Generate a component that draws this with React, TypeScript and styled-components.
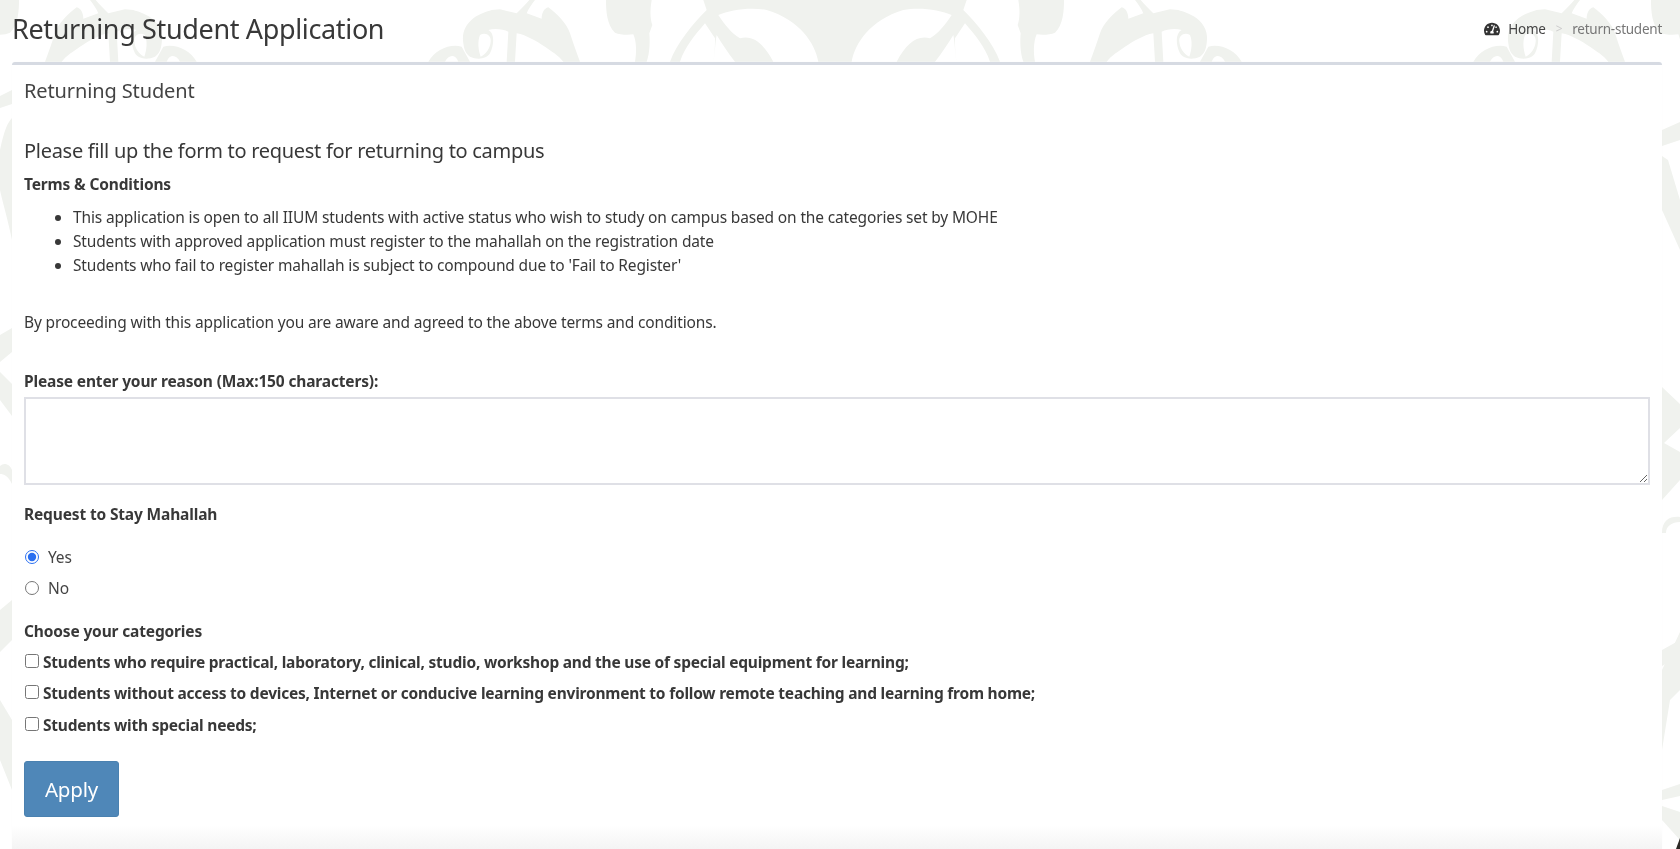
import { createGlobalStyle } from "styled-components"
import styled from "styled-components"
import { FaTachometerAlt } from "react-icons/fa"

const GlobalStyle = createGlobalStyle`
  html {
    height: 100%;
    background: #fff;
  }

  body {
    margin: 0;
    height: 100%;
    overflow: hidden;
    font-family: "Noto Sans", "Open Sans", sans-serif;
    color: #383838;
  }
`

const Backdrop = styled.svg`
  position: fixed;
  top: 0;
  left: 0;
  width: 1680px;
  height: 849px;
  z-index: -1;
`

const Page = styled.div`
  padding: 0 18px 0 12px;
`

const PageHeader = styled.header`
  display: flex;
  align-items: center;
  justify-content: space-between;
  height: 62px;
`

const Title = styled.h1`
  margin: 0 0 6px;
  font-size: 27px;
  font-weight: 400;
  letter-spacing: -0.35px;
  color: #383838;
`

const Breadcrumb = styled.nav`
  display: flex;
  align-items: center;
  margin-bottom: 5px;
  font-size: 13.5px;
  letter-spacing: -0.25px;
`

const Crumb = styled.span<{ $muted?: boolean }>`
  color: ${props => (props.$muted ? "#777" : "#444")};
`

const CrumbIcon = styled(FaTachometerAlt)`
  width: 16px;
  height: 16px;
  margin-right: 8px;
  color: #333;
`

const CrumbSeparator = styled.span`
  padding: 0 10px;
  color: #ccc;
  font-size: 12px;
`

const Card = styled.section`
  height: 784px;
  border-top: 3px solid #d6dae2;
  border-radius: 3px 3px 0 0;
  background: linear-gradient(to bottom, #fff 97%, #f4f4f4 100%);
  box-shadow: 0 0 1px rgba(0, 0, 0, 0.05);
`

const CardHeader = styled.div`
  height: 48px;
  padding: 13px 12px 0;
  box-sizing: border-box;
  font-size: 20px;
  letter-spacing: -0.12px;
  line-height: 25px;
  color: #444;
`

const CardBody = styled.div`
  padding: 24px 11px 0 12px;
`

const Lead = styled.h3`
  margin: 0 0 8px;
  font-size: 20px;
  line-height: 28px;
  font-weight: 400;
  letter-spacing: -0.29px;
  color: #383838;
`

const Strong = styled.div<{ $gap?: number }>`
  margin-top: ${props => props.$gap ?? 0}px;
  font-size: 15.5px;
  line-height: 22px;
  font-weight: 700;
  letter-spacing: -0.15px;
`

const Terms = styled.ul`
  margin: 9.5px 0 0;
  padding-left: 49px;
  font-size: 15.5px;
  line-height: 24px;
  letter-spacing: -0.15px;
`

const Note = styled.p`
  margin: 33px 0 0;
  font-size: 15.5px;
  line-height: 24px;
  letter-spacing: -0.15px;
`

const ReasonBox = styled.textarea`
  display: block;
  box-sizing: border-box;
  width: 1626px;
  height: 88px;
  margin: 5px 0 0;
  border: 2px solid #dfe0e6;
  background: #fff;
  outline: none;
`

const RadioGroup = styled.div`
  display: flex;
  flex-direction: column;
  gap: 9px;
  margin-top: 21px;
`

const Choice = styled.label`
  display: flex;
  align-items: center;
  height: 22px;
  font-size: 15.5px;
  letter-spacing: -0.15px;
  color: #444;
`

const Radio = styled.input.attrs({ type: "radio" })`
  width: 14px;
  height: 14px;
  margin: 0 9px 0 1px;
  accent-color: #2a6ff0;
`

const CheckList = styled.div`
  display: flex;
  flex-direction: column;
  gap: 9.5px;
  margin-top: 9px;
`

const CheckRow = styled.label`
  display: flex;
  align-items: center;
  height: 22px;
  font-size: 15.5px;
  font-weight: 700;
  letter-spacing: -0.22px;
`

const Check = styled.input.attrs({ type: "checkbox" })`
  width: 14px;
  height: 14px;
  margin: -2px 4px 0 1px;
`

const ApplyButton = styled.button`
  display: block;
  width: 95px;
  height: 56px;
  margin: 25px 0 0;
  border: 1px solid #4a81b0;
  border-radius: 3px;
  background: #4f87b8;
  color: #fff;
  font-family: inherit;
  font-size: 20.5px;
  letter-spacing: -0.2px;
`

const motif = "#f0f2ee"

// one half of the repeating batik tile, traced at 3x so x = 420 + px / 3
const Pattern = () => (
  <Backdrop viewBox="0 0 1680 849" aria-hidden="true">
    <defs>
      <g id="half">
        <g transform="translate(420 0) scale(0.33333)">
          <path
            fill={motif}
            d="M130 130 C125 100 135 75 160 55 C180 40 200 35 215 30 L240 28 L290 40 C300 30 315 15 328 0 L345 0 C335 12 325 28 320 40 L365 56 C365 40 372 25 385 22 C410 40 440 70 450 100 C460 130 470 160 480 185 L430 185 C415 165 395 155 375 140 C350 125 320 105 290 100 L285 185 L260 185 L265 95 C250 88 225 84 205 90 C225 100 222 135 210 160 C200 178 170 180 150 170 C135 160 132 145 130 130 Z"
          />
          <path fill="#fff" d="M180 105 C195 95 215 105 212 125 C210 145 200 160 182 170 C175 150 172 125 180 105 Z" />
          <path fill={motif} d="M25 185 C45 150 90 130 125 140 L150 185 Z" />
          <path fill="#fff" d="M75 185 C85 165 105 160 115 185 Z" />
          <path
            fill={motif}
            d="M558 0 C558 30 560 75 585 98 C600 105 625 105 640 103 C650 125 650 160 645 185 L680 185 C690 160 690 120 688 100 L697 75 C690 55 690 30 695 0 Z"
          />
          <path
            fill={motif}
            d="M750 185 C770 130 820 70 860 30 L850 0 L1245 0 L1245 185 L1195 185 C1185 130 1140 60 1040 30 C990 20 930 30 895 45 C915 75 935 100 960 115 C1000 105 1030 130 1060 185 L945 185 C925 160 905 130 890 105 C885 130 885 165 880 185 C885 160 885 130 885 115 L855 70 C825 105 795 140 780 185 Z"
          />
        </g>
      </g>
    </defs>
    <use href="#half" />
    <use href="#half" transform="translate(1670 0) scale(-1 1)" />
    <use href="#half" transform="translate(1045 0)" />
    <use href="#half" transform="translate(625 0) scale(-1 1)" />
    <g fill={motif}>
      {/* left strip */}
      <path d="M0 96 L12 90 L12 104 L0 108 Z" />
      <path d="M0 150 C4 130 8 122 12 118 L12 240 C8 220 2 200 0 190 Z" />
      <path d="M0 335 L12 328 L12 352 L0 362 Z" />
      <path d="M0 372 L12 384 L12 416 L0 400 Z" />
      <path d="M0 466 C4 462 10 464 12 470 L12 484 C8 476 4 474 0 474 Z" />
      <path d="M0 610 L12 600 L12 640 L0 652 Z" />
      <path d="M0 700 L12 720 L12 790 L0 760 Z" />
      {/* right strip */}
      <path d="M1662 130 L1680 122 L1680 140 L1662 146 Z" />
      <path d="M1662 156 L1668 160 L1680 200 L1680 250 L1662 210 Z" />
      <path d="M1662 387 L1680 404 L1680 428 L1664 443 L1680 452 L1680 480 L1662 500 Z" />
      <path d="M1662 533 C1662 520 1670 516 1680 517 L1680 522 C1672 522 1666 526 1666 533 Z" />
      <path d="M1662 650 L1680 640 L1680 656 L1662 666 Z" />
      <path d="M1662 670 L1680 632 L1680 690 L1670 700 L1662 750 Z" />
      <path d="M1662 790 L1680 784 L1680 796 L1662 800 Z" />
      <path d="M1662 806 L1680 812 L1680 840 L1662 820 Z" />
    </g>
    <path d="M1680 838 L1680 849 L1676 849 Z" fill="#2d2a26" />
  </Backdrop>
)

const App = () => (
  <>
    <GlobalStyle />
    <Pattern />
    <Page>
      <PageHeader>
        <Title>Returning Student Application</Title>
        <Breadcrumb>
          <CrumbIcon />
          <Crumb>Home</Crumb>
          <CrumbSeparator>&gt;</CrumbSeparator>
          <Crumb $muted>return-student</Crumb>
        </Breadcrumb>
      </PageHeader>
      <Card>
        <CardHeader>Returning Student</CardHeader>
        <CardBody>
          <Lead>Please fill up the form to request for returning to campus</Lead>
          <Strong>Terms &amp; Conditions</Strong>
          <Terms>
            <li>This application is open to all IIUM students with active status who wish to study on campus based on the categories set by MOHE</li>
            <li>Students with approved application must register to the mahallah on the registration date</li>
            <li>Students who fail to register mahallah is subject to compound due to 'Fail to Register'</li>
          </Terms>
          <Note>By proceeding with this application you are aware and agreed to the above terms and conditions.</Note>
          <Strong $gap={36}>Please enter your reason (Max:150 characters):</Strong>
          <ReasonBox />
          <Strong $gap={18}>Request to Stay Mahallah</Strong>
          <RadioGroup>
            <Choice>
              <Radio name="stay" defaultChecked />
              Yes
            </Choice>
            <Choice>
              <Radio name="stay" />
              No
            </Choice>
          </RadioGroup>
          <Strong $gap={21}>Choose your categories</Strong>
          <CheckList>
            <CheckRow>
              <Check />
              Students who require practical, laboratory, clinical, studio, workshop and the use of special equipment for learning;
            </CheckRow>
            <CheckRow>
              <Check />
              Students without access to devices, Internet or conducive learning environment to follow remote teaching and learning from home;
            </CheckRow>
            <CheckRow>
              <Check />
              Students with special needs;
            </CheckRow>
          </CheckList>
          <ApplyButton type="button">Apply</ApplyButton>
        </CardBody>
      </Card>
    </Page>
  </>
)

export default App
